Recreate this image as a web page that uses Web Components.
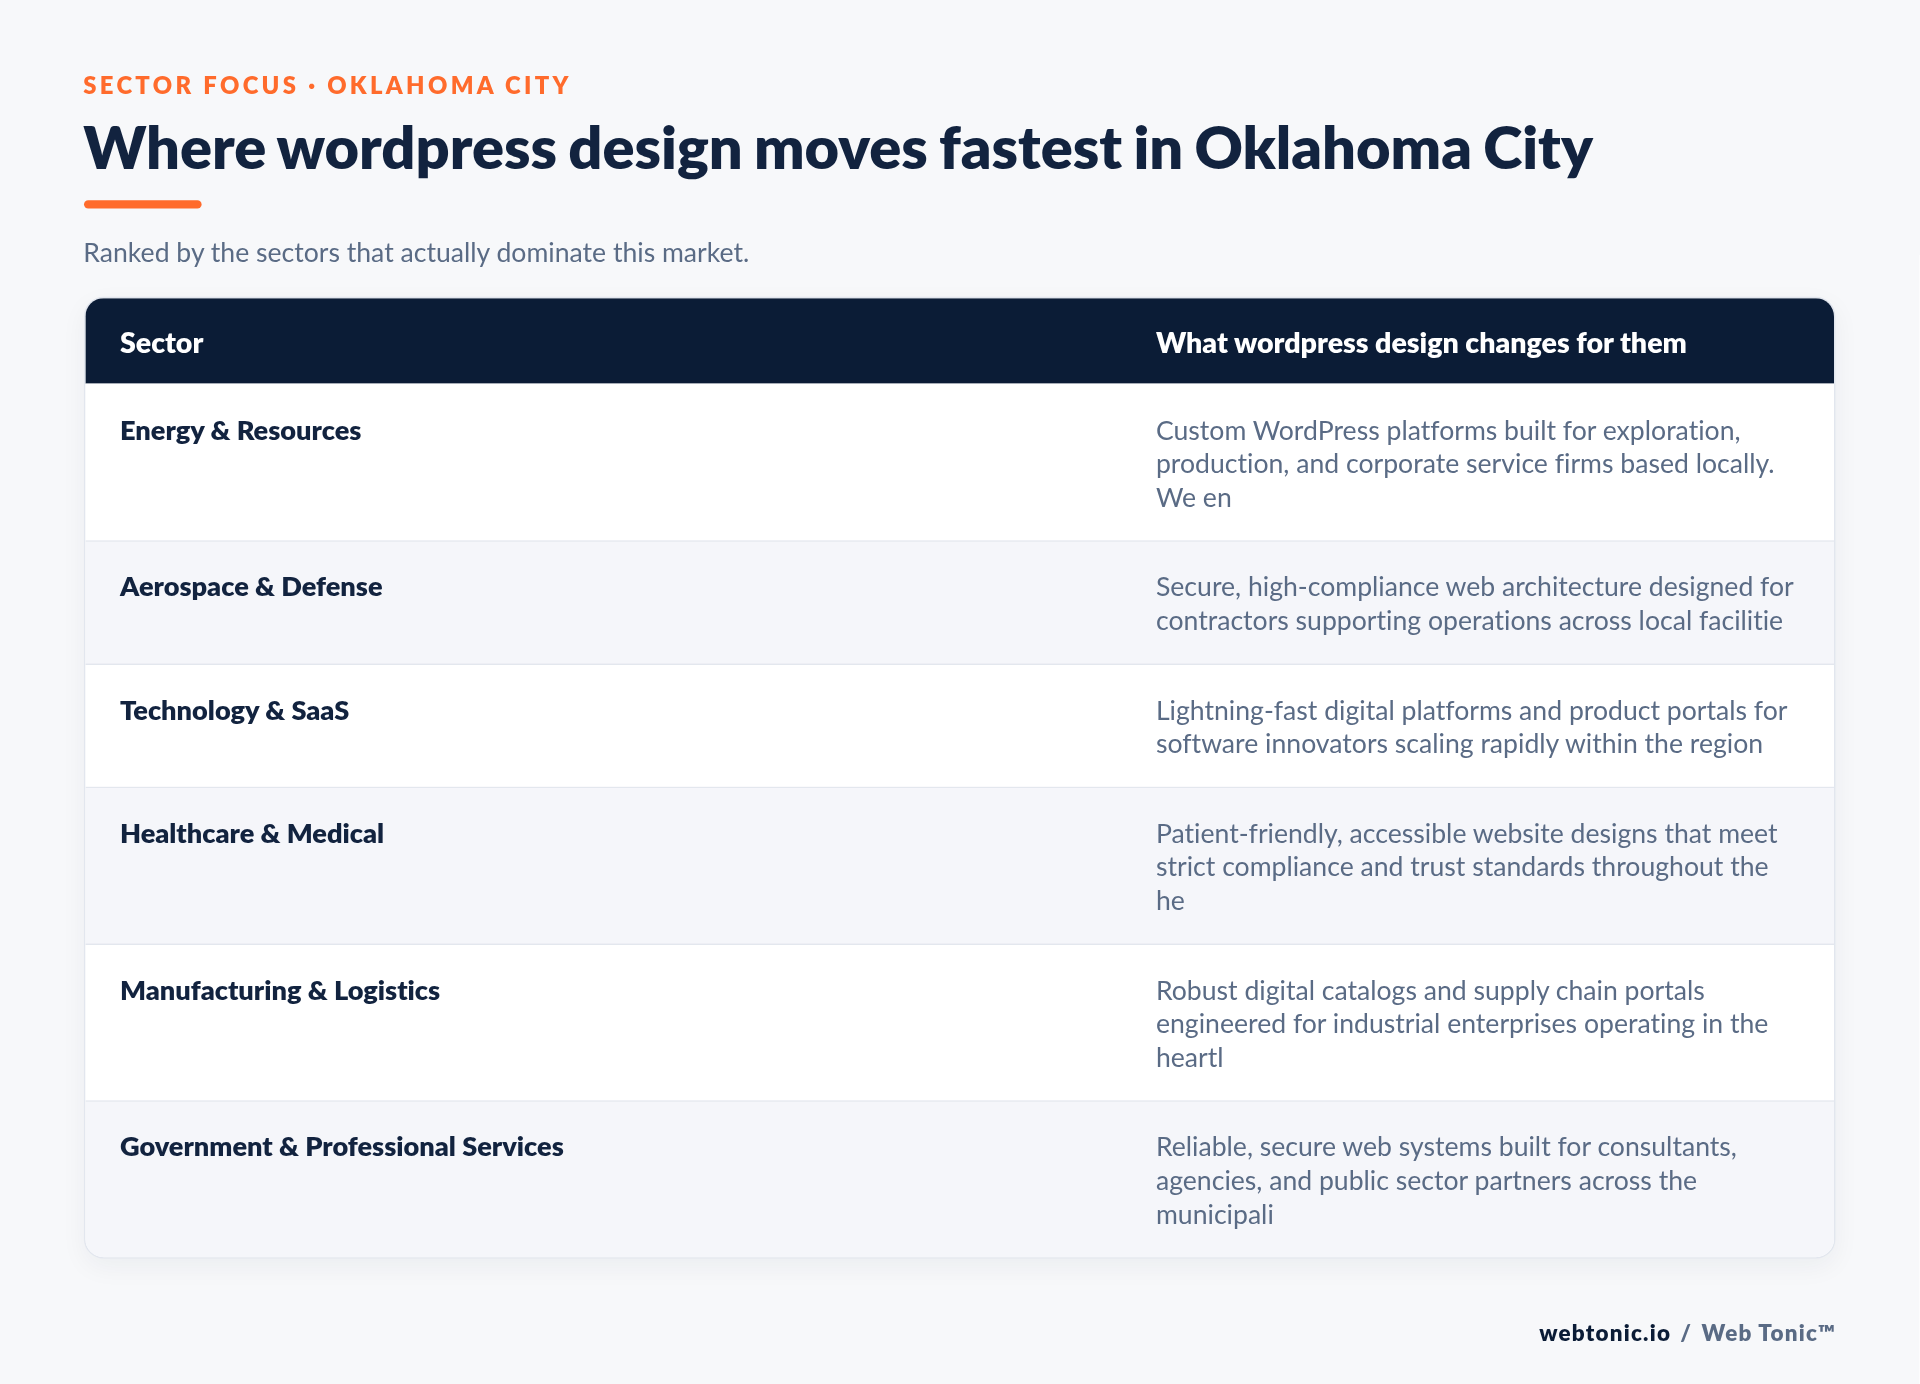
<!DOCTYPE html>
<html lang="en"><head><meta charset="utf-8"><title>Sector focus</title>
<style>
html,body{margin:0;padding:0;background:#f7f8fa}
body{font-family:Lato,"Liberation Sans",sans-serif;width:1920px;height:1384px;overflow:hidden;font-variant-ligatures:no-common-ligatures}
</style></head><body>
<sector-page>
  <page-header slot="header" eyebrow="SECTOR FOCUS · OKLAHOMA CITY" title-text="Where wordpress design moves fastest in Oklahoma City" sub="Ranked by the sectors that actually dominate this market."></page-header>
  <sector-table>
    <sector-row head name="Sector">What wordpress design changes for them</sector-row>
    <sector-row first name="Energy &amp; Resources">Custom WordPress platforms built for exploration, production, and corporate service firms based locally. We en</sector-row>
    <sector-row alt name="Aerospace &amp; Defense">Secure, high-compliance web architecture designed for contractors supporting operations across local facilitie</sector-row>
    <sector-row name="Technology &amp; SaaS">Lightning-fast digital platforms and product portals for software innovators scaling rapidly within the region</sector-row>
    <sector-row alt name="Healthcare &amp; Medical">Patient-friendly, accessible website designs that meet strict compliance and trust standards throughout the he</sector-row>
    <sector-row name="Manufacturing &amp; Logistics">Robust digital catalogs and supply chain portals engineered for industrial enterprises operating in the heartl</sector-row>
    <sector-row alt last name="Government &amp; Professional Services">Reliable, secure web systems built for consultants, agencies, and public sector partners across the municipali</sector-row>
  </sector-table>
  <page-footer></page-footer>
</sector-page>
<script>
class SectorPage extends HTMLElement{constructor(){super();this.attachShadow({mode:'open'}).innerHTML=`<style>
:host{display:flex;flex-direction:column;box-sizing:border-box;width:calc(1920px / 1.4);height:calc(1384px / 1.4);padding:50px 60px 0;background:#f7f8fa;transform:scale(1.4);transform-origin:0 0;will-change:transform;filter:blur(.2px)}
</style><slot name="header"></slot><slot></slot>`}}
class PageHeader extends HTMLElement{connectedCallback(){const a=n=>this.getAttribute(n);const s=this.attachShadow({mode:'open'});s.innerHTML=`<style>
:host{display:block;margin-left:-.5px}
.e{font-size:17px;line-height:20px;font-weight:800;letter-spacing:.14em;color:#ff6b2c;padding-top:1px}
h1{margin:10.5px 0 0;font-size:42.5px;line-height:46px;font-weight:800;word-spacing:-1.75px;color:#12233f}
.b{width:84px;height:6px;border-radius:3px;background:#ff6b2c;margin-top:15.5px}
p{margin:18.7px 0 0;font-size:19px;line-height:24px;color:#5a6b85}
</style><div class="e"></div><h1></h1><div class="b"></div><p></p>`;
s.querySelector('.e').textContent=a('eyebrow');s.querySelector('h1').textContent=a('title-text');s.querySelector('p').textContent=a('sub');}}
class SectorTable extends HTMLElement{constructor(){super();this.attachShadow({mode:'open'}).innerHTML=`<style>
:host{display:block;margin-top:20.3px;border:.8px solid #e2e6ee;border-radius:14px;overflow:hidden;background:#fff;box-shadow:0 6px 18px rgba(15,30,60,.05)}
</style><slot></slot>`}}
class SectorRow extends HTMLElement{connectedCallback(){const s=this.attachShadow({mode:'open'});s.innerHTML=`<style>
:host{display:grid;grid-template-columns:740px 1fr;box-sizing:border-box;background:#fff;border-bottom:1px solid #e3e7ee;padding:20px 0 19px}
:host([first]){padding-top:21px}
:host([alt]){background:#f5f6fa}
:host([last]){border-bottom:0;padding-bottom:19px}
:host([head]){background:#0b1c36;border-bottom:0;padding:19px 0 17px}
.n{padding-left:24.7px;font-size:19.4px;line-height:24px;font-weight:800;color:#12233f}
.d{padding:0 25px 0 24.7px;font-size:19px;line-height:24px;color:#5a6b85}
:host([head]) .n,:host([head]) .d{color:#fff;font-weight:800;font-size:20.4px;line-height:25px}
</style><div class="n"></div><div class="d"><slot></slot></div>`;
s.querySelector('.n').textContent=this.getAttribute('name');}}
class PageFooter extends HTMLElement{constructor(){super();this.attachShadow({mode:'open'}).innerHTML=`<style>
:host{display:block;margin-top:43px;text-align:right;font-size:16px;line-height:20px;font-weight:800;letter-spacing:.055em;color:#5a6b85}
b{color:#0b1c36;font-weight:800}
span{margin:0 2px}
</style><b>webtonic.io</b> <span>/</span> Web Tonic™`}}
customElements.define('sector-page',SectorPage);
customElements.define('page-header',PageHeader);
customElements.define('sector-table',SectorTable);
customElements.define('sector-row',SectorRow);
customElements.define('page-footer',PageFooter);
</script></body></html>
